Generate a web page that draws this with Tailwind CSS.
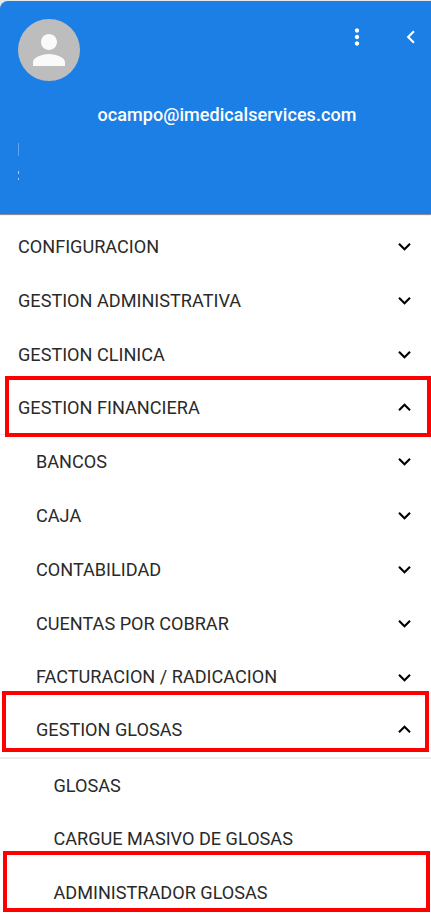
<!DOCTYPE html>
<html lang="es">
<head>
<meta charset="utf-8">
<title>Menú</title>
<script src="https://cdn.jsdelivr.net/npm/@tailwindcss/browser@4"></script>
</head>
<body class="bg-[#e4eaec]">
<svg class="hidden">
  <symbol id="down" viewBox="0 0 24 24"><path d="M7.41 8.59 12 13.17l4.59-4.58L18 10l-6 6-6-6z"/></symbol>
  <symbol id="up" viewBox="0 0 24 24"><path d="M7.41 15.41 12 10.83l4.59 4.58L18 14l-6-6-6 6z"/></symbol>
</svg>
<div class="w-[431px] h-[922px] pt-px overflow-hidden relative bg-[linear-gradient(#e4eaec_0_20px,#fff_20px)] font-['Roboto',sans-serif] text-[18.120px] text-[#2a2a2a]">
  <header class="relative h-[213px] bg-[#1c7fe5] rounded-tl-[8px] text-white flex flex-col pl-[18px] pt-[18px] shadow-[0_1px_1px_rgba(0,0,0,0.5)]">
    <div class="flex items-start h-[62px]">
      <div class="size-[62px] rounded-full bg-[#bdbdbd] flex items-center justify-center">
        <svg class="size-[48px]" viewBox="0 0 24 24" fill="#fafafa"><path d="M12 12c2.21 0 4-1.79 4-4s-1.79-4-4-4-4 1.79-4 4 1.79 4 4 4zm0 2c-2.67 0-8 1.34-8 4v2h16v-2c0-2.660-5.330-4-8-4z"/></svg>
      </div>
      <svg class="ml-[264px] mt-[5px] size-[26px]" viewBox="0 0 24 24" fill="currentColor"><path d="M12 8c1.100 0 2-.9 2-2s-.9-2-2-2-2 .9-2 2 .9 2 2 2zm0 2c-1.100 0-2 .9-2 2s.9 2 2 2 2-.9 2-2-.9-2-2-2zm0 6c-1.100 0-2 .9-2 2s.9 2 2 2 2-.9 2-2-.9-2-2-2z"/></svg>
      <svg class="ml-[28px] mt-[5px] size-[26px] shrink-0" viewBox="0 0 24 24" fill="currentColor"><path d="M15.410 7.410 14 6l-6 6 6 6 1.410-1.410L10.830 12z"/></svg>
    </div>
    <div class="ml-[79.500px] mt-[22px] h-[24px] leading-[24px] text-[18px] font-medium tracking-[0.060px]">ocampo@imedicalservices.com</div>
    <div class="mt-[16px] w-px h-[13px] bg-white/30"></div>
    <div class="mt-[15px] w-px h-[3px] bg-white/60"></div>
    <div class="mt-[4px] w-px h-[2px] bg-white/60"></div>
  </header>
  <nav class="pt-[5.800px]">
    <div class="h-[53.800px] pl-[18px] pr-[14px] flex items-center justify-between"><span>CONFIGURACION</span><svg class="size-[25px]"><use href="#down"/></svg></div>
    <div class="h-[53.800px] pl-[18px] pr-[14px] flex items-center justify-between"><span>GESTION ADMINISTRATIVA</span><svg class="size-[25px]"><use href="#down"/></svg></div>
    <div class="h-[53.800px] pl-[18px] pr-[14px] flex items-center justify-between"><span>GESTION CLINICA</span><svg class="size-[25px]"><use href="#down"/></svg></div>
    <div class="h-[53.800px] pl-[18px] pr-[14px] flex items-center justify-between border-b border-[#e8e8e8]"><span>GESTION FINANCIERA</span><svg class="size-[25px]"><use href="#up"/></svg></div>
    <div class="h-[53.800px] pl-[36px] pr-[14px] flex items-center justify-between"><span>BANCOS</span><svg class="size-[25px]"><use href="#down"/></svg></div>
    <div class="h-[53.800px] pl-[36px] pr-[14px] flex items-center justify-between"><span>CAJA</span><svg class="size-[25px]"><use href="#down"/></svg></div>
    <div class="h-[53.800px] pl-[36px] pr-[14px] flex items-center justify-between"><span>CONTABILIDAD</span><svg class="size-[25px]"><use href="#down"/></svg></div>
    <div class="h-[53.800px] pl-[36px] pr-[14px] flex items-center justify-between"><span>CUENTAS POR COBRAR</span><svg class="size-[25px]"><use href="#down"/></svg></div>
    <div class="h-[53.800px] pl-[36px] pr-[14px] flex items-center justify-between"><span>FACTURACION / RADICACION</span><svg class="size-[25px]"><use href="#down"/></svg></div>
    <div class="h-[55px] pb-[2px] pl-[36px] pr-[14px] flex items-center justify-between border-b-2 border-[#ececec]"><span>GESTION GLOSAS</span><svg class="size-[25px]"><use href="#up"/></svg></div>
    <div class="h-[52.600px] pl-[53.500px] flex items-center"><span>GLOSAS</span></div>
    <div class="h-[53.800px] pl-[53.500px] flex items-center"><span>CARGUE MASIVO DE GLOSAS</span></div>
    <div class="h-[53.800px] pl-[53.500px] flex items-center"><span>ADMINISTRADOR GLOSAS</span></div>
  </nav>
  <!-- Highlight frames over the selected path -->
  <div class="absolute left-[5px] top-[376px] w-[426px] h-[61px] border-4 border-[#ff0000]"></div>
  <div class="absolute left-[2px] top-[691px] w-[427px] h-[61px] border-4 border-[#ff0000]"></div>
  <div class="absolute left-[3px] top-[851px] w-[427px] h-[61px] border-4 border-[#ff0000]"></div>
</div>
</body>
</html>
